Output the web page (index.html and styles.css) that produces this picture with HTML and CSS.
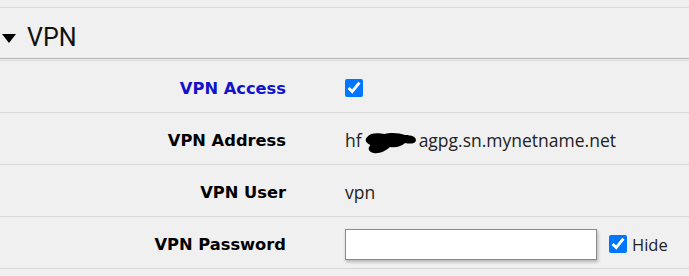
FILE: index.html
```html
<!DOCTYPE html>
<html>
<head>
<meta charset="utf-8">
<link rel="stylesheet" href="styles.css">
</head>
<body>
<div class="topline"></div>
<h2 class="section-title"><span class="caret"></span>VPN</h2>
<div class="form">
  <div class="row">
    <div class="label label-active">VPN Access</div>
    <div class="value"><input type="checkbox" class="check" checked></div>
  </div>
  <div class="row">
    <div class="label">VPN Address</div>
    <div class="value"><span class="addr">hf<span class="redact"><svg width="54" height="24" viewBox="0 0 50 24" preserveAspectRatio="none"><path d="M3 6 C6 1 14 2 19 3 C25 1 33 2 38 4 C44 4 49 6 48 10 C47 13 42 13 38 12 C35 15 30 17 24 16 C20 20 14 23 9 22 C4 21 3 17 6 14 C2 12 0 9 3 6 Z" fill="#000"/></svg></span>agpg.sn.mynetname.net</span></div>
  </div>
  <div class="row">
    <div class="label">VPN User</div>
    <div class="value">vpn</div>
  </div>
  <div class="row">
    <div class="label">VPN Password</div>
    <div class="value">
      <input type="text" class="text-input">
      <label class="hide"><input type="checkbox" class="check" checked>Hide</label>
    </div>
  </div>
</div>
</body>
</html>
```
FILE: styles.css
```css
html, body {
  margin: 0;
  padding: 0;
  background: #f0f0f0;
}
body {
  font-family: "Open Sans", "DejaVu Sans", sans-serif;
  color: #222;
}
.topline {
  height: 7px;
  border-bottom: 1px solid #dadada;
}
.section-title {
  margin: 0;
  height: 51px;
  box-sizing: border-box;
  display: flex;
  align-items: center;
  padding: 9px 0 0 2px;
  font-family: Roboto, "Open Sans", sans-serif;
  font-weight: 400;
  font-size: 25px;
  color: #111;
  border-bottom: 1px solid #b2b2b2;
}
.caret {
  width: 0;
  height: 0;
  border-left: 7.5px solid transparent;
  border-right: 7.5px solid transparent;
  border-top: 9px solid #000;
  margin-right: 11px;
  margin-top: 2px;
}
.form {
  margin-top: 1px;
  border-top: 1px solid #dcdcdc;
}
.row {
  display: grid;
  grid-template-columns: 286px 1fr;
  column-gap: 59px;
  align-items: center;
  box-sizing: border-box;
  height: 52px;
  padding-top: 3px;
  border-bottom: 1px solid #d8d8d8;
}
.label {
  text-align: right;
  font-family: "DejaVu Sans", Verdana, sans-serif;
  font-weight: bold;
  font-size: 16.3px;
  color: #000;
}
.label-active {
  color: #1212cc;
}
.value {
  display: flex;
  align-items: center;
  font-size: 17.5px;
  color: #222;
}
.addr {
  display: inline-flex;
  align-items: center;
}
.redact {
  display: inline-block;
  width: 54px;
  height: 24px;
  margin: 6px 1px 0 2px;
}
.redact svg {
  display: block;
}
.check {
  width: 18px;
  height: 18px;
  margin: 0;
  accent-color: #0075ff;
}
.text-input {
  width: 252px;
  height: 31px;
  box-sizing: border-box;
  margin: 0;
  border: 1px solid #8a8a8a;
  background: #fff;
  box-shadow: 1px 2px 3px rgba(0,0,0,0.25);
  border-radius: 0;
  padding: 0 4px;
}
.hide {
  display: flex;
  align-items: center;
  margin-left: 12px;
  gap: 5px;
  font-size: 16.5px;
  color: #222;
}
```
